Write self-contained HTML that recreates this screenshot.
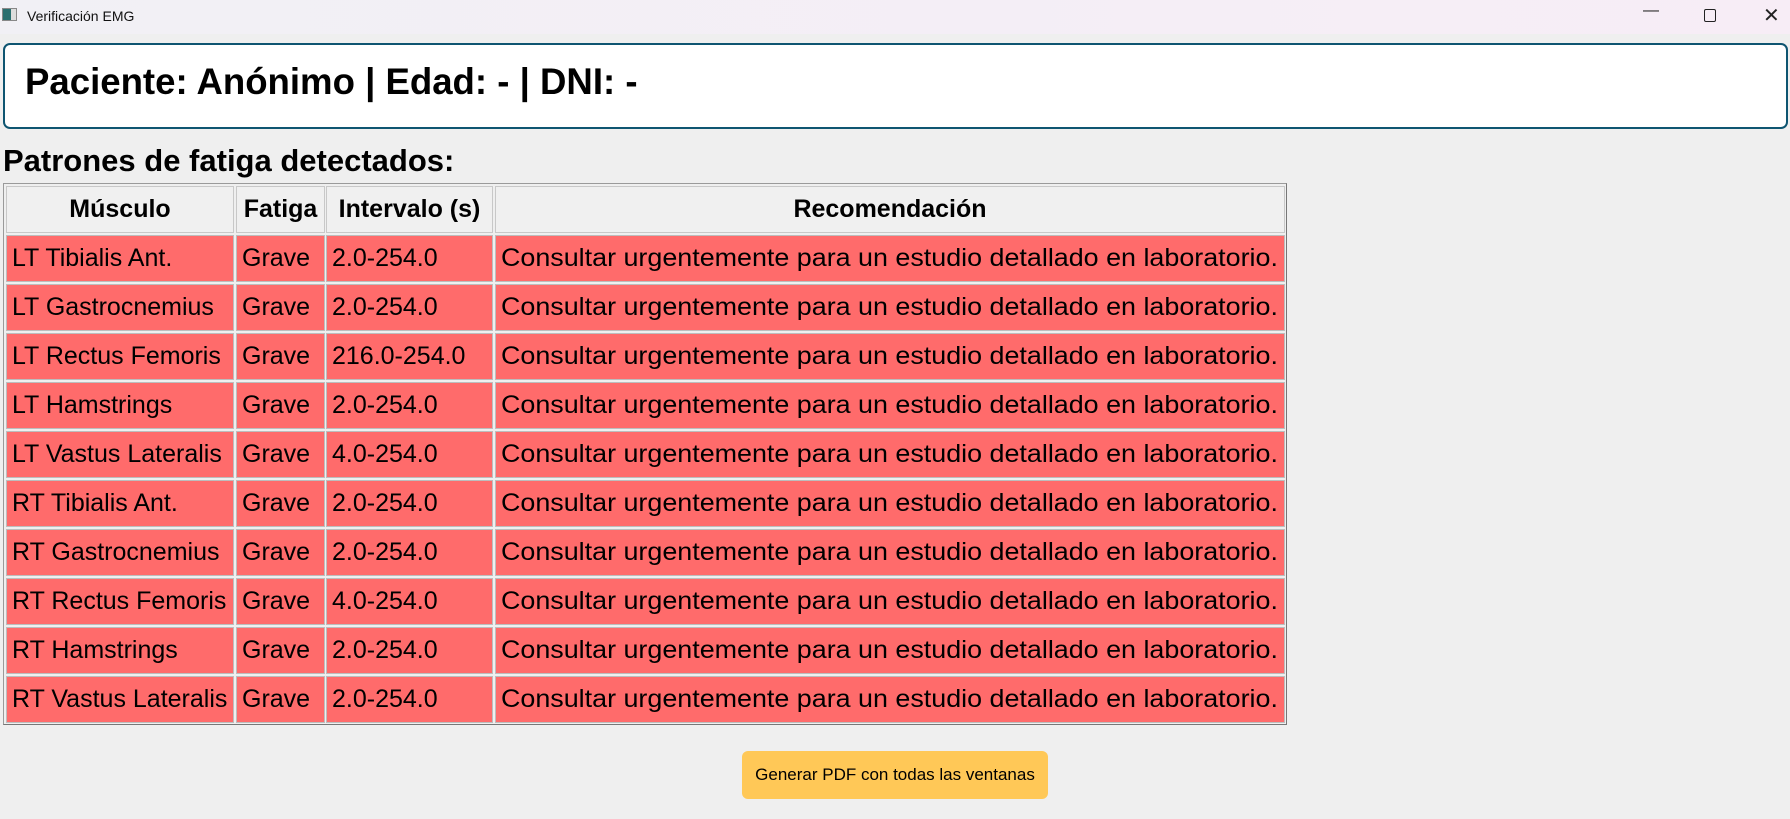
<!DOCTYPE html>
<html><head><meta charset="utf-8"><style>
*{margin:0;padding:0;box-sizing:border-box}
body{width:1790px;height:819px;background:#efefef;font-family:"Liberation Sans","DejaVu Sans",sans-serif;position:relative;overflow:hidden;color:#000}
.tb{position:absolute;left:0;top:0;width:1790px;height:34px;background:linear-gradient(90deg,#f1f0f5,#f7edf6)}
.tb .t{position:absolute;left:27px;top:8px;font-size:14px;color:#111}
.ic{position:absolute;left:2px;top:8px;width:15px;height:13px;border:1px solid #888;background:linear-gradient(90deg,#2a6f6f 0 60%,#ddd 60%)}
.wc{position:absolute;top:6px;font-size:16px;color:#222}
.box{position:absolute;left:3px;top:43px;width:1785px;height:86px;background:#fff;border:2px solid #0e5571;border-radius:7px}
.box div{position:absolute;left:20px;top:16px;font-size:36.6px;font-weight:bold}
.h2{position:absolute;left:3px;top:143px;font-size:31px;font-weight:bold}
.tbl{position:absolute;left:3px;top:183px;width:1284px;height:542px;border:1px solid #9a9a9a;border-right-color:#777;border-bottom-color:#777}
.c{position:absolute;border:1px solid #c8c8c8;font-size:25px;line-height:45px;white-space:nowrap;overflow:hidden;padding-left:5px}
.h{background:#f0f0f0;font-weight:bold;text-align:center;padding-left:0}
.r{background:#ff6b6b;border-color:#bdbdbd}
.btn{position:absolute;left:742px;top:751px;width:306px;height:48px;background:#ffc857;border-radius:6px;font-size:17px;line-height:48px;text-align:center}
</style></head><body>
<div class="tb"><div class="ic"></div><div class="t">Verificación EMG</div>
<div class="wc" style="left:1643px;top:2px">—</div>
<div class="wc" style="left:1704px;width:12px;height:13px;border:1.5px solid #222;border-radius:2px;top:9px"></div>
<div class="wc" style="left:1763px;top:3px;font-size:20px">✕</div></div>
<div class="box"><div>Paciente: Anónimo | Edad: - | DNI: -</div></div>
<div class="h2">Patrones de fatiga detectados:</div>
<div class="tbl" id="t"></div>
<div class="btn">Generar PDF con todas las ventanas</div>
<script>
var cols=[[2,228],[232,89],[322,167],[491,790]];
var rows=[["LT Tibialis Ant.","2.0-254.0"],["LT Gastrocnemius","2.0-254.0"],["LT Rectus Femoris","216.0-254.0"],["LT Hamstrings","2.0-254.0"],["LT Vastus Lateralis","4.0-254.0"],["RT Tibialis Ant.","2.0-254.0"],["RT Gastrocnemius","2.0-254.0"],["RT Rectus Femoris","4.0-254.0"],["RT Hamstrings","2.0-254.0"],["RT Vastus Lateralis","2.0-254.0"]];
var t=document.getElementById('t'),h='';
var hd=["Músculo","Fatiga","Intervalo (s)","Recomendación"];
for(var j=0;j<4;j++)h+='<div class="c h" style="left:'+cols[j][0]+'px;top:2px;width:'+cols[j][1]+'px;height:47px;line-height:45px">'+hd[j]+'</div>';
for(var i=0;i<10;i++){var y=51+i*49;var v=[rows[i][0],"Grave",rows[i][1],"Consultar urgentemente para un estudio detallado en laboratorio."];
for(var j=0;j<4;j++)h+='<div class="c r" style="left:'+cols[j][0]+'px;top:'+y+'px;width:'+cols[j][1]+'px;height:47px">'+(j==3?'<span style="display:inline-block;transform:scaleX(1.075);transform-origin:left">'+v[j]+'</span>':v[j])+'</div>';}
t.innerHTML=h;
</script>
</body></html>
